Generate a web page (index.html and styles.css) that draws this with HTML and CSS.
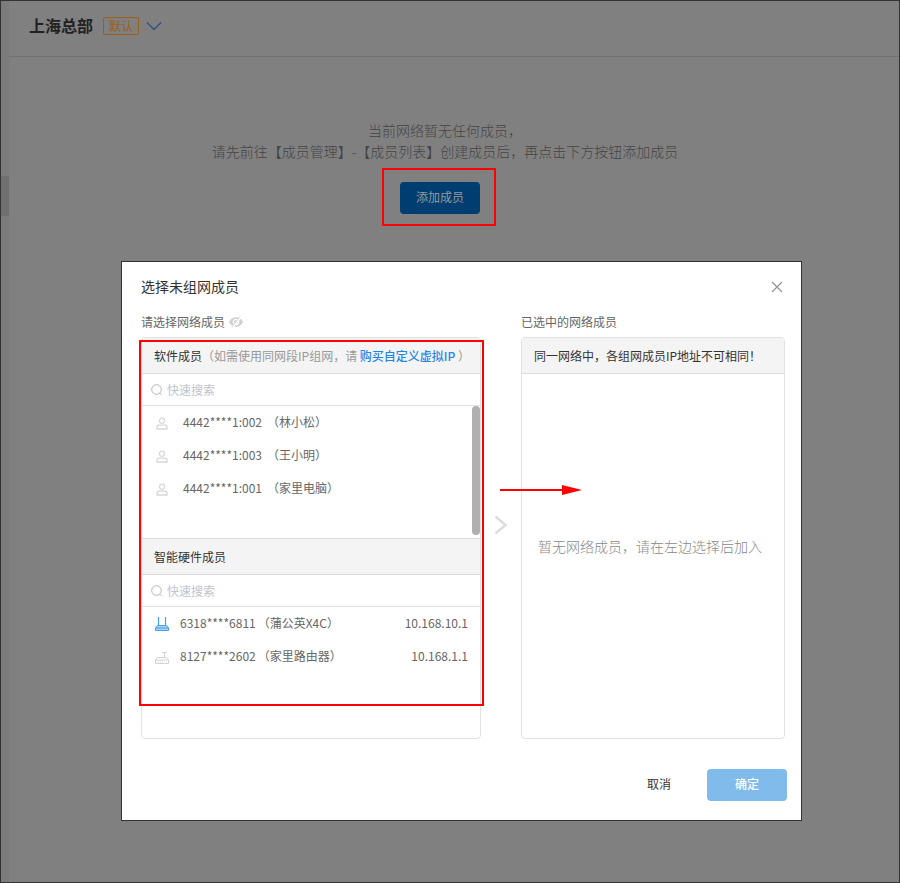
FILE: index.html
```html
<!DOCTYPE html>
<html lang="zh-CN">
<head>
    <meta charset="UTF-8">
    <meta name="viewport" content="width=device-width, initial-scale=1.0">
    <title>上海总部</title>
    <link rel="stylesheet" href="styles.css">
</head>
<body>
    <div class="page">
        <div class="sidebar"><div class="sidebar-active"></div></div>
        <main class="main">
            <header class="header">
                <h1>上海总部</h1>
                <span class="tag">默认</span>
                <button class="icon-btn" type="button" aria-label="切换网络">
                    <svg width="16" height="10" viewBox="0 0 16 10" fill="none" stroke="#2f4f86" stroke-width="1.3"><path d="M1 1.5l7 7 7-7"/></svg>
                </button>
            </header>
            <section class="empty">
                <p>当前网络暂无任何成员，</p>
                <p>请先前往【成员管理】-【成员列表】创建成员后，再点击下方按钮添加成员</p>
                <div class="add-mark">
                    <button class="add-btn" type="button">添加成员</button>
                </div>
            </section>
        </main>
    </div>

    <div class="modal-wrap">
        <div class="modal" role="dialog" aria-labelledby="modalTitle">
            <div class="modal-header">
                <h2 id="modalTitle">选择未组网成员</h2>
                <button class="icon-btn" type="button" aria-label="关闭">
                    <svg width="12" height="12" viewBox="0 0 12 12" fill="none" stroke="#8f939b" stroke-width="1.2"><path d="M1 1l10 10M11 1L1 11"/></svg>
                </button>
            </div>
            <div class="columns">
                <div class="column">
                    <div class="column-label">请选择网络成员
                        <svg width="14" height="12" viewBox="0 0 14 12"><path d="M0 6C2 2.6 4.3 1.2 7 1.2S12 2.6 14 6c-2 3.4-4.3 4.8-7 4.8S2 9.4 0 6z" fill="#cfcfcf"/><circle cx="7" cy="6" r="2.7" fill="none" stroke="#fff" stroke-width="1.2"/><path d="M3.2 11.5L11.5 1" stroke="#fff" stroke-width="2.2"/><path d="M2.8 11L11 .6" stroke="#cfcfcf" stroke-width="1"/></svg>
                    </div>
                    <div class="panel-box">
                        <div class="panel">
                            <div class="panel-title">软件成员<span class="note">（如需使用同网段IP组网，请 <a href="#">购买自定义虚拟IP</a> ）</span></div>
                            <label class="search">
                                <svg width="12" height="12" viewBox="0 0 12 12" fill="none" stroke="#b4b4b4"><circle cx="5.5" cy="5.5" r="4.8"/><path d="M8.8 9.2l2 2"/></svg>
                                <input type="text" placeholder="快速搜索" aria-label="搜索软件成员">
                            </label>
                            <ul class="list list-soft">
                                <li>
                                    <svg class="user" width="12" height="13" viewBox="0 0 12 13" fill="none" stroke="#d8d8d8" stroke-width="1.3"><circle cx="6" cy="3.7" r="2.6"/><path d="M1 12v-1.5C1 9 2 8.2 3.2 8.2h5.600C10 8.2 11 9 11 10.500V12z"/></svg>
                                    <span>4442****1:002</span><span class="name">（林小松）</span>
                                </li>
                                <li>
                                    <svg class="user" width="12" height="13" viewBox="0 0 12 13" fill="none" stroke="#d8d8d8" stroke-width="1.3"><circle cx="6" cy="3.7" r="2.6"/><path d="M1 12v-1.5C1 9 2 8.2 3.2 8.2h5.600C10 8.2 11 9 11 10.500V12z"/></svg>
                                    <span>4442****1:003</span><span class="name">（王小明）</span>
                                </li>
                                <li>
                                    <svg class="user" width="12" height="13" viewBox="0 0 12 13" fill="none" stroke="#d8d8d8" stroke-width="1.3"><circle cx="6" cy="3.7" r="2.6"/><path d="M1 12v-1.5C1 9 2 8.2 3.2 8.2h5.600C10 8.2 11 9 11 10.500V12z"/></svg>
                                    <span>4442****1:001</span><span class="name">（家里电脑）</span>
                                </li>
                            </ul>
                            <div class="panel-title second">智能硬件成员</div>
                            <label class="search">
                                <svg width="12" height="12" viewBox="0 0 12 12" fill="none" stroke="#b4b4b4"><circle cx="5.5" cy="5.5" r="4.8"/><path d="M8.8 9.2l2 2"/></svg>
                                <input type="text" placeholder="快速搜索" aria-label="搜索智能硬件成员">
                            </label>
                            <ul class="list list-hard">
                                <li>
                                    <svg width="14" height="14" viewBox="0 0 14 14" fill="none" stroke="#4a9fe3"><path d="M3.5 0v8M10.5 0v8" stroke-width="1.2"/><path d="M2.5 8.5h9l2 2.5v2.5H.5V11z" fill="#a9d3f5"/><path d="M.5 11h13"/></svg>
                                    <span>6318****6811</span><span class="device">（蒲公英X4C）</span><span class="ip">10.168.10.1</span>
                                </li>
                                <li>
                                    <svg width="14" height="14" viewBox="0 0 14 14" fill="none" stroke="#d3d3d3"><path d="M9.5 2v5M7 2.5h5"/><path d="M2.5 7.5h9l2 2.5v3.500H.5V10z"/><path d="M.5 10h13M3 12h1M5 12h1M7 12h1"/></svg>
                                    <span>8127****2602</span><span class="device">（家里路由器）</span><span class="ip">10.168.1.1</span>
                                </li>
                            </ul>
                        </div>
                        <div class="list-mark"></div>
                    </div>
                </div>
                <div class="between">
                    <svg width="14" height="20" viewBox="0 0 14 20" fill="none" stroke="#dcdcdc" stroke-width="2.5"><path d="M1.5 1.5L11.5 10l-10 8.500"/></svg>
                    <svg class="arrow" width="82" height="12" viewBox="0 0 82 12"><path d="M0 5h62V1l20 5-20 5V7H0z" fill="#f00"/></svg>
                </div>
                <div class="column">
                    <div class="column-label">已选中的网络成员</div>
                    <div class="panel chosen">
                        <div class="panel-title">同一网络中，各组网成员IP地址不可相同！</div>
                        <p class="chosen-empty">暂无网络成员，请在左边选择后加入</p>
                    </div>
                </div>
            </div>
            <div class="modal-footer">
                <button class="cancel-btn" type="button">取消</button>
                <button class="ok-btn" type="button">确定</button>
            </div>
        </div>
    </div>
</body>
</html>
```

FILE: styles.css
```css
* {
    box-sizing: border-box;
}
body {
    margin: 0;
    font-family: 'Noto Sans CJK SC', sans-serif;
    font-size: 12px;
    line-height: 20px;
    color: #666;
    background-color: #808080;
}
h1, h2, p, ul {
    margin: 0;
    padding: 0;
}
button, input {
    font-family: inherit;
    font-size: 12px;
}
button {
    border: none;
    border-radius: 4px;
    padding: 0 0 3px;
    cursor: pointer;
}
svg {
    flex: none;
}
.icon-btn {
    display: flex;
    padding: 0;
    background: none;
}

/* Page behind the modal */
.page {
    display: flex;
    min-height: 100vh;
    border: 1px solid #333;
}
.sidebar {
    width: 8px;
    padding-top: 175px;
    background-color: #7b7b7b;
}
.sidebar-active {
    height: 40px;
    background-color: #707070;
}
.main {
    flex: 1;
}
.header {
    display: flex;
    align-items: center;
    height: 56px;
    padding: 0 20px 5px;
    border-bottom: 1px solid #727272;
}
h1 {
    padding-bottom: 2px;
    font-size: 16px;
    font-weight: 700;
    color: #222;
}
.tag {
    margin: 0 7px 0 10px;
    padding: 0 5px;
    line-height: 16px;
    border: 1px solid #99601a;
    border-radius: 2px;
    color: #99601a;
}
.empty {
    display: flex;
    flex-direction: column;
    align-items: center;
    padding: 63px 18px 0 0;
    font-size: 14px;
    font-weight: 300;
    line-height: 21px;
    color: #444;
}
.add-mark {
    margin: 6px 12px 0 0;
    padding: 12px 14px 10px 16px;
    border: 2px solid #f00;
}
.add-btn {
    display: block;
    width: 80px;
    height: 32px;
    background-color: #003e71;
    color: #999;
}

/* Modal */
.modal-wrap {
    position: absolute;
    top: 261px;
    left: 121px;
    right: 98px;
}
.modal {
    padding: 15px 16px 19px 19px;
    background-color: #fff;
    border: 1px solid #333;
}
.modal-header {
    display: flex;
    justify-content: space-between;
    align-items: center;
    height: 20px;
    padding-right: 2px;
}
h2 {
    padding-bottom: 2px;
    font-size: 14px;
    font-weight: 400;
    color: #333;
}
.columns {
    display: grid;
    grid-template-columns: 340px 40px 1fr;
    margin-top: 15px;
}
.column {
    display: flex;
    flex-direction: column;
}
.column-label {
    display: flex;
    align-items: center;
    gap: 4px;
    margin-bottom: 5px;
}
.panel-box {
    position: relative;
}
.panel {
    border: 1px solid #e2e2e2;
    border-radius: 4px;
    overflow: hidden;
}
.panel-title {
    height: 36px;
    padding: 0 12px;
    line-height: 36px;
    border-bottom: 1px solid #dcdcdc;
    background-color: #f4f4f4;
    color: #333;
    white-space: nowrap;
}
.second {
    height: 37px;
    border-top: 1px solid #dcdcdc;
}
.note {
    color: #999;
}
.note a {
    font-weight: 500;
    color: #1f87e8;
    text-decoration: none;
}
.search {
    display: flex;
    align-items: center;
    gap: 4px;
    height: 32px;
    padding: 0 9px;
    border-bottom: 1px solid #e2e2e2;
}
.search input {
    flex: 1;
    border: none;
    outline: none;
    padding: 0;
    background: none;
}
.search input::placeholder {
    color: #c0c4cc;
}
.list {
    list-style: none;
}
.list li {
    display: flex;
    align-items: center;
    height: 33px;
    padding: 0 12px 0 13px;
}
.list span {
    padding-bottom: 2px;
}
.list svg {
    margin-right: 11px;
}
.list .user {
    margin: 2px 15px 0 1px;
}
.name {
    margin-left: 5px;
}
.device {
    margin-left: 2px;
}
.ip {
    margin-left: auto;
}
.list-soft {
    position: relative;
    height: 132px;
}
/* scrollbar thumb */
.list-soft::after {
    content: "";
    position: absolute;
    top: 0;
    right: 0;
    width: 8px;
    height: 129px;
    border-radius: 4px;
    background-color: #b0b0b0;
}
.list-hard {
    height: 131px;
}
.list-mark {
    position: absolute;
    top: 3px;
    left: -2px;
    right: -3px;
    height: 366px;
    border: 2px solid #f00;
    pointer-events: none;
}
.between {
    position: relative;
    display: flex;
    justify-content: center;
    align-items: center;
    padding-bottom: 2px;
}
.arrow {
    position: absolute;
    top: 172px;
    left: 19px;
}
.chosen {
    flex: 1;
    display: flex;
    flex-direction: column;
}
.chosen-empty {
    margin: auto;
    padding: 0 6px 20px 0;
    font-size: 14px;
    font-weight: 300;
    color: #888;
}
.modal-footer {
    display: flex;
    justify-content: flex-end;
    gap: 12px;
    margin: 30px -2px 0 0;
}
.modal-footer button {
    width: 80px;
    height: 32px;
}
.modal-footer .cancel-btn {
    width: 72px;
    background: none;
    color: #333;
}
.modal-footer .ok-btn {
    font-weight: 500;
    background-color: #80bbeb;
    color: #fff;
}
```
